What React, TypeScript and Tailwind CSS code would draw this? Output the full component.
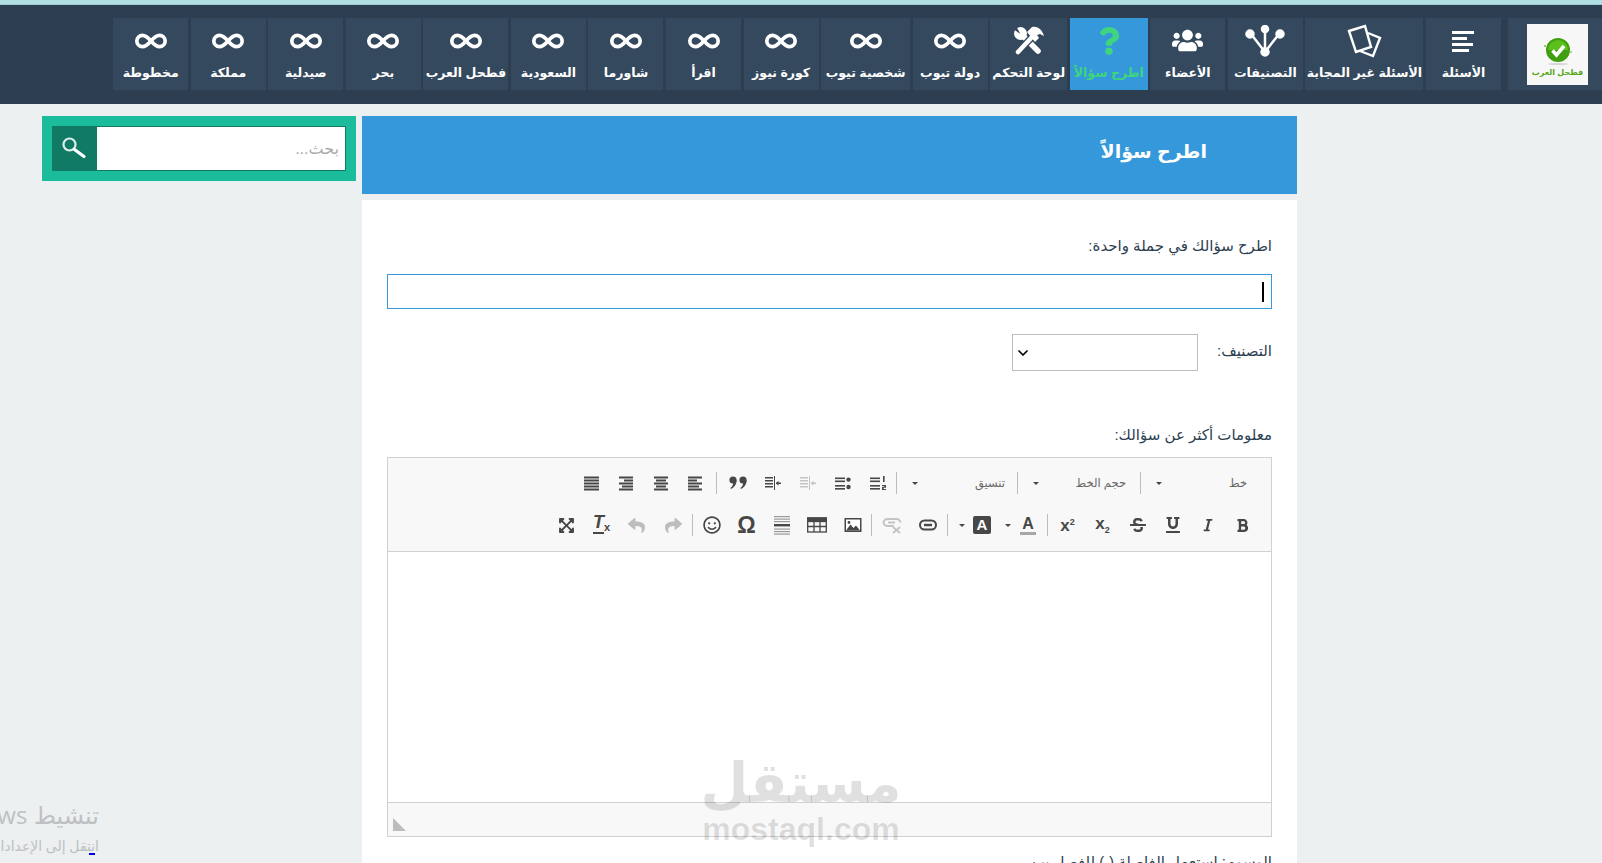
import { ChevronDown, Infinity as InfinityIcon } from "lucide-react";
import type { ReactNode } from "react";
import {
  FaBold,
  FaExpandArrowsAlt,
  FaItalic,
  FaQuestion,
  FaRegSmile,
  FaReply,
  FaShare,
  FaStrikethrough,
  FaUnderline,
  FaUsers,
} from "react-icons/fa";

const arabicFont = "font-['Liberation_Sans','DejaVu_Sans',sans-serif]";

function LinesIcon() {
  return (
    <svg width="24" height="22" viewBox="0 0 24 22" fill="#fff">
      <rect x="1" y="1" width="22" height="3" />
      <rect x="1" y="7" width="15" height="3" />
      <rect x="1" y="13" width="21" height="3" />
      <rect x="1" y="19" width="17" height="3" />
    </svg>
  );
}

function CardsIcon() {
  return (
    <svg width="36" height="34" viewBox="0 0 36 34" fill="none" stroke="#fff" strokeWidth="2.4">
      <path d="M3 7 L19 2 L25 23 L10 28 Z" />
      <path d="M22 9 L34 14 L27 32 L14 27" />
    </svg>
  );
}

function BranchIcon() {
  return (
    <svg width="40" height="32" viewBox="0 0 40 32" fill="#fff" stroke="#fff" strokeWidth="2.5">
      <path d="M6 9 L20 27 L34 9 M20 27 L20 4" fill="none" />
      <circle cx="5" cy="9" r="3.5" />
      <circle cx="20" cy="4" r="3" />
      <circle cx="35" cy="9" r="3.5" />
      <circle cx="20" cy="27" r="3.5" />
    </svg>
  );
}

function ToolsIcon() {
  return (
    <svg width="32" height="30" viewBox="0 0 32 30">
      <circle cx="7.5" cy="7.5" r="6.5" fill="#fff" />
      <path d="M0 3 L7.5 8 L3 0 Z" fill="#34495e" />
      <path d="M9 9 L25 25" stroke="#fff" strokeWidth="5.5" strokeLinecap="round" />
      <path d="M5 26 L20 10" stroke="#34495e" strokeWidth="7" />
      <path d="M5 26 L20 10" stroke="#fff" strokeWidth="4.5" strokeLinecap="round" />
      <path d="M14 6 L19 1 C24 0 29 3 31 10 L27 8 L24 9 L26 12 L22 16 Z" fill="#fff" />
    </svg>
  );
}

function SearchIcon() {
  return (
    <svg width="28" height="28" viewBox="0 0 28 28" fill="none">
      <circle cx="10.5" cy="10.5" r="6" stroke="#dff0ee" strokeWidth="2.2" />
      <path d="M15.5 15.5 L25 22.5" stroke="#fff" strokeWidth="3.2" strokeLinecap="round" />
    </svg>
  );
}

const navItems = [
  { label: "الأسئلة", width: "w-[75px]", icon: <LinesIcon /> },
  { label: "الأسئلة غير المجابة", width: "w-[118px]", icon: <CardsIcon /> },
  { label: "التصنيفات", width: "w-[75px]", icon: <BranchIcon /> },
  { label: "الأعضاء", width: "w-[75px]", icon: <FaUsers size={31} /> },
  { label: "اطرح سؤالاً", width: "w-[78px]", icon: <FaQuestion size={28} />, active: true },
  { label: "لوحة التحكم", width: "w-[77px]", icon: <ToolsIcon /> },
  { label: "دولة تيوب", width: "w-[75px]" },
  { label: "شخصية تيوب", width: "w-[89px]" },
  { label: "كورة نيوز", width: "w-[75px]" },
  { label: "اقرأ", width: "w-[75px]" },
  { label: "شاورما", width: "w-[75px]" },
  { label: "السعودية", width: "w-[75px]" },
  { label: "فطحل العرب", width: "w-[85px]" },
  { label: "بحر", width: "w-[75px]" },
  { label: "صيدلية", width: "w-[75px]" },
  { label: "مملكة", width: "w-[75px]" },
  { label: "مخطوطة", width: "w-[75px]" },
];

function Logo() {
  return (
    <div className="flex h-[61px] w-[61px] flex-col items-center bg-[#f7f7f7] pt-[12px]">
      <svg width="32" height="30" viewBox="0 0 32 30">
        <circle cx="3" cy="10" r="1" fill="#7dbb4a" />
        <circle cx="29" cy="16" r="1" fill="#9cc97a" />
        <circle cx="16" cy="14" r="12" fill="#3f9f10" />
        <path d="M6 14 A10 10 0 0 1 26 14 Z" fill="#5cbf1c" />
        <path d="M10.5 14.5 L14.5 19 L22 10" fill="none" stroke="#fff" strokeWidth="3.6" />
        <ellipse cx="16" cy="28" rx="10" ry="1" fill="#d5d5d5" />
      </svg>
      <span className="mt-[1px] text-[8px] leading-[11px] font-bold whitespace-nowrap text-[#5aa820]">
        فطحل العرب
      </span>
    </div>
  );
}

function Btn({ w = "w-[35px]", children, className = "" }: { w?: string; children: ReactNode; className?: string }) {
  return <div className={`flex h-[24px] shrink-0 items-center justify-center text-[#474747] ${w} ${className}`}>{children}</div>;
}

function Sep({ className = "" }: { className?: string }) {
  return <div className={`h-[22px] w-px shrink-0 bg-[#bcbcbc] ${className}`} />;
}

function Arrow() {
  return <div className="h-0 w-0 border-x-[3px] border-t-[3px] border-x-transparent border-t-[#474747]" />;
}

function Combo({ label, width, pad }: { label: string; width: string; pad: string }) {
  return (
    <div className={`flex h-[24px] shrink-0 items-center justify-between pl-[15px] text-[11.5px] text-[#666] ${width} ${pad}`}>
      <span className="whitespace-nowrap">{label}</span>
      <Arrow />
    </div>
  );
}

function Lines({ rows, fill = "#474747" }: { rows: [number, number][]; fill?: string }) {
  return (
    <svg width="16" height="16" viewBox="0 0 16 16" fill={fill}>
      {rows.map(([x, w], i) => (
        <rect key={i} x={x} y={1.5 + i * 3} width={w} height="2" />
      ))}
    </svg>
  );
}

function QuoteIcon() {
  return (
    <svg width="18" height="14" viewBox="0 0 18 14" fill="#474747">
      <circle cx="4" cy="4" r="3.6" />
      <path d="M7.6 4 C7.6 8 5.5 11.5 2 13 L1.4 12 C3.2 10.6 4 9 4 7.4 Z" />
      <circle cx="14" cy="4" r="3.6" />
      <path d="M17.6 4 C17.6 8 15.5 11.5 12 13 L11.4 12 C13.2 10.6 14 9 14 7.4 Z" />
    </svg>
  );
}

function IndentIcon({ fill }: { fill: string }) {
  return (
    <svg width="18" height="16" viewBox="0 0 18 16" fill={fill}>
      <rect x="1" y="2" width="8" height="1.5" />
      <rect x="1" y="5" width="8" height="1.5" />
      <rect x="1" y="8" width="8" height="1.5" />
      <rect x="1" y="11" width="8" height="1.5" />
      <rect x="10" y="1" width="1" height="14" />
      <rect x="12" y="7.5" width="5" height="1.5" />
      <path d="M12 8.2 L14.5 5.7 L14.5 10.7 Z" />
    </svg>
  );
}

function BulletIcon() {
  return (
    <svg width="18" height="16" viewBox="0 0 18 16" fill="#474747">
      <rect x="1" y="2.5" width="10" height="1.6" />
      <rect x="1" y="5.5" width="10" height="1.6" />
      <rect x="1" y="10" width="10" height="1.6" />
      <rect x="1" y="13" width="10" height="1.6" />
      <circle cx="14.5" cy="4.6" r="2.2" />
      <circle cx="14.5" cy="12" r="2.2" />
    </svg>
  );
}

function NumberedIcon() {
  return (
    <svg width="18" height="16" viewBox="0 0 18 16" fill="#474747">
      <rect x="1" y="2.5" width="10" height="1.6" />
      <rect x="1" y="5.5" width="10" height="1.6" />
      <rect x="1" y="10" width="10" height="1.6" />
      <rect x="1" y="13" width="10" height="1.6" />
      <rect x="14" y="1" width="1.6" height="6" />
      <path d="M13 10 H17 V12.7 H14.6 V14 H17 V15 H13 V11.8 H15.4 V11 H13 Z" />
    </svg>
  );
}

function ChainIcon({ color }: { color: string }) {
  return (
    <svg width="18" height="12" viewBox="0 0 18 12" fill="none" stroke={color} strokeWidth="2">
      <rect x="1" y="1.5" width="16" height="9" rx="4.5" />
      <path d="M5 6 H13" strokeWidth="2.4" />
    </svg>
  );
}

function UnlinkIcon() {
  return (
    <svg width="20" height="18" viewBox="0 0 20 18" fill="none" stroke="#c4c4c4" strokeWidth="2">
      <path d="M12 10 H6 C3.5 10 1.5 8.5 1.5 6.5 C1.5 4.5 3.5 3 6 3 H14 C16.5 3 18.5 4.5 18.5 6.5" />
      <path d="M6 6.5 H13" />
      <path d="M11 11 L18 17 M18 11 L11 17" />
    </svg>
  );
}

function ImageIcon() {
  return (
    <svg width="18" height="16" viewBox="0 0 18 16">
      <rect x="0.5" y="1" width="17" height="14" fill="#474747" />
      <rect x="2" y="2.5" width="14" height="11" fill="#fff" />
      <path d="M2 13.5 L6.5 7.5 L9.5 11 L12 8.5 L16 13.5 Z" fill="#474747" />
      <circle cx="5" cy="5.5" r="1.4" fill="#474747" />
    </svg>
  );
}

function TableIcon() {
  return (
    <svg width="20" height="16" viewBox="0 0 20 16" fill="none" stroke="#474747" strokeWidth="1.3">
      <rect x="0.7" y="1" width="18.6" height="14" />
      <rect x="0.7" y="1" width="18.6" height="3.5" fill="#474747" />
      <path d="M7 4.5 V15 M13 4.5 V15 M0.7 9.5 H19.3" />
    </svg>
  );
}

function HrIcon() {
  return (
    <svg width="18" height="20" viewBox="0 0 18 20" fill="#9a9a9a">
      <rect x="1" y="1" width="16" height="1.2" />
      <rect x="1" y="3.5" width="16" height="1.2" />
      <rect x="1" y="6" width="16" height="1.2" />
      <rect x="1" y="9" width="16" height="2.4" fill="#474747" />
      <rect x="1" y="13.5" width="16" height="1.2" />
      <rect x="1" y="16" width="16" height="1.2" />
      <rect x="1" y="18.5" width="16" height="1.2" />
    </svg>
  );
}

function Toolbar() {
  return (
    <div className="flex h-[94px] flex-col border-b border-[#d1d1d1] bg-[#f8f8f8] pt-[13px]" dir="rtl">
      <div className="flex h-[24px] items-center">
        <Combo label="خط" width="w-[130px]" pad="pr-[24px]" />
        <Sep />
        <Combo label="حجم الخط" width="w-[122px]" pad="pr-[14px]" />
        <Sep />
        <Combo label="تنسيق" width="w-[120px]" pad="pr-[12px]" />
        <Sep className="ml-[1px]" />
        <Btn><NumberedIcon /></Btn>
        <Btn><BulletIcon /></Btn>
        <Btn><IndentIcon fill="#c4c4c4" /></Btn>
        <Btn><IndentIcon fill="#474747" /></Btn>
        <Btn><QuoteIcon /></Btn>
        <Sep className="mr-[3px] ml-[3px]" />
        <Btn><Lines rows={[[0, 14], [0, 9], [0, 14], [0, 11], [0, 14]]} /></Btn>
        <Btn><Lines rows={[[1, 14], [3, 10], [1, 14], [3, 10], [1, 14]]} /></Btn>
        <Btn><Lines rows={[[1, 14], [6, 9], [1, 14], [4, 11], [1, 14]]} /></Btn>
        <Btn><Lines rows={[[1, 15], [1, 15], [1, 15], [1, 15], [1, 15]]} /></Btn>
      </div>
      <div className="mt-[18px] flex h-[24px] items-center pr-[11px]">
        <Btn><FaBold size={15} /></Btn>
        <Btn><FaItalic size={14} /></Btn>
        <Btn><FaUnderline size={16} /></Btn>
        <Btn><FaStrikethrough size={16} /></Btn>
        <Btn>
          <span dir="ltr" className="text-[17px] leading-none font-bold">
            x<span className="align-[-4px] text-[9px]">2</span>
          </span>
        </Btn>
        <Btn>
          <span dir="ltr" className="text-[17px] leading-none font-bold">
            x<span className="align-[6px] text-[9px]">2</span>
          </span>
        </Btn>
        <Sep className="mr-[2px]" />
        <Btn w="w-[34px]" className="mr-[2px]">
          <span className="border-b-[3px] border-[#a8a8a8] px-[2px] text-[16px] leading-[17px] font-bold">A</span>
        </Btn>
        <Btn w="w-[6px]"><Arrow /></Btn>
        <Btn w="w-[34px]" className="mr-[6px]">
          <span className="flex h-[18px] w-[18px] items-center justify-center rounded-[2px] bg-[#474747] text-[15px] font-bold text-white">A</span>
        </Btn>
        <Btn w="w-[6px]"><Arrow /></Btn>
        <Sep className="mr-[11px]" />
        <Btn w="w-[38px]"><ChainIcon color="#474747" /></Btn>
        <Btn><UnlinkIcon /></Btn>
        <Sep className="mr-[2px]" />
        <Btn w="w-[37px]"><ImageIcon /></Btn>
        <Btn><TableIcon /></Btn>
        <Btn><HrIcon /></Btn>
        <Btn><span className="text-[23px] leading-none font-bold">Ω</span></Btn>
        <Btn><FaRegSmile size={18} /></Btn>
        <Sep className="mr-[1px]" />
        <Btn w="w-[38px]"><FaShare size={17} className="text-[#bdbdbd]" /></Btn>
        <Btn><FaReply size={17} className="text-[#bdbdbd]" /></Btn>
        <Btn>
          <span dir="ltr" className="text-[18px] leading-[17px] font-bold italic">
            <span className="border-b-2 border-[#474747]">T</span>
            <span className="align-[-3px] text-[11px] not-italic">x</span>
          </span>
        </Btn>
        <Btn><FaExpandArrowsAlt size={17} /></Btn>
      </div>
    </div>
  );
}

export default function App() {
  return (
    <div dir="rtl" className={`relative h-screen overflow-hidden bg-[#ecf0f1] ${arabicFont}`}>
      <div className="h-[5px] border-b border-[#9fcbd2] bg-[#b2dfe4]" />

      {/* Top nav */}
      <nav className="flex h-[99px] items-start gap-[2.55px] bg-[#2c3e50] pt-[13px]">
        <div className="ml-[4.5px] flex h-[72px] w-[94px] items-center justify-center bg-[#34495e]">
          <div className="ml-[5px]">
            <Logo />
          </div>
        </div>
        {navItems.map((item) => (
          <a
            key={item.label}
            href="#"
            className={`flex h-[72px] shrink-0 flex-col items-center ${item.width} ${
              item.active ? "bg-[#3498db] text-[#40d47e]" : "bg-[#34495e] text-white"
            }`}
          >
            <div className="flex h-[46px] items-center justify-center pb-[1px]">
              {item.icon ?? <InfinityIcon size={34} strokeWidth={2.6} />}
            </div>
            <span className="text-[12.5px] leading-[18px] font-bold whitespace-nowrap">{item.label}</span>
          </a>
        ))}
      </nav>

      <div className="flex items-start gap-[6px] pt-[12px] pr-[305px]">
        <main className="w-[935px] shrink-0">
          <div className="flex h-[78px] items-center bg-[#3498db] pr-[90px] pb-[6px]">
            <h1 className="text-[19px] font-bold text-white">اطرح سؤالاً</h1>
          </div>

          <div className="mt-[6px] h-[700px] bg-white px-[25px] pt-[36px] text-[15px] leading-[20px] text-[#2c3e50]">
            <label className="block">اطرح سؤالك في جملة واحدة:</label>
            <div className="relative mt-[18px]">
              <input className="block h-[35px] w-full border border-[#3498db] bg-white outline-none" />
              <span className="absolute top-[8px] right-[8px] h-[20px] w-[2px] bg-black" />
            </div>

            <div className="mt-[25px] flex items-center">
              <label className="w-[74px] shrink-0 pb-[4px]">التصنيف:</label>
              <div className="relative">
                <select className="block h-[37px] w-[186px] appearance-none border border-[#bdbdbd] bg-white" />
                <ChevronDown size={16} strokeWidth={2.6} className="absolute top-[11px] left-[3px] text-black" />
              </div>
            </div>

            <label className="mt-[54px] block">معلومات أكثر عن سؤالك:</label>
            <div className="mt-[12px] border border-[#d1d1d1]">
              <Toolbar />
              <div className="h-[250px] bg-white" />
              <div className="flex h-[34px] items-end justify-end border-t border-[#d1d1d1] bg-[#f8f8f8] pb-[5px] pl-[5px]">
                <svg width="13" height="13" viewBox="0 0 13 13" fill="#bcbcbc">
                  <path d="M0 0 L13 13 L0 13 Z" />
                </svg>
              </div>
            </div>

            <label className="mt-[15px] block">الوسوم: استعمل الفاصلة (،) للفصل بين</label>
          </div>
        </main>

        {/* Search box */}
        <div className="flex h-[65px] w-[314px] shrink-0 items-center bg-[#1abc9c] px-[10px]">
          <div className="flex h-[45px] w-full" dir="rtl">
            <input
              placeholder="بحث..."
              className="h-full min-w-0 flex-1 border border-[#117a65] bg-white px-[6px] text-[16px] text-[#333] outline-none placeholder:text-[#aaa]"
            />
            <div className="flex w-[44px] shrink-0 items-center justify-center bg-[#117a65] pr-[3px] pb-[2px]">
              <SearchIcon />
            </div>
          </div>
        </div>
      </div>

      {/* Site watermark */}
      <div dir="ltr" className="pointer-events-none absolute top-[752px] left-[705px] flex w-[192px] flex-col items-center text-black/[0.12]">
        <span dir="rtl" className="text-[55px] leading-[62px] font-bold">مستقل</span>
        <span className="text-[32px] leading-[30px] font-bold">mostaql.com</span>
      </div>

      {/* Windows activation notice */}
      <div className="pointer-events-none absolute top-[798px] left-0 w-[99px] whitespace-nowrap text-[#bdc1c3]">
        <div className="font-['Open_Sans','DejaVu_Sans',sans-serif] text-[24px] leading-[34px]">تنشيط Windows</div>
        <div className="mt-[2px] font-['Open_Sans','DejaVu_Sans',sans-serif] text-[14px] leading-[24px]">انتقل إلى الإعدادات لتنشيط Windows.</div>
        <div className="absolute top-[55px] right-[4px] h-[2px] w-[6px] bg-[#0000e0]" />
      </div>
    </div>
  );
}
